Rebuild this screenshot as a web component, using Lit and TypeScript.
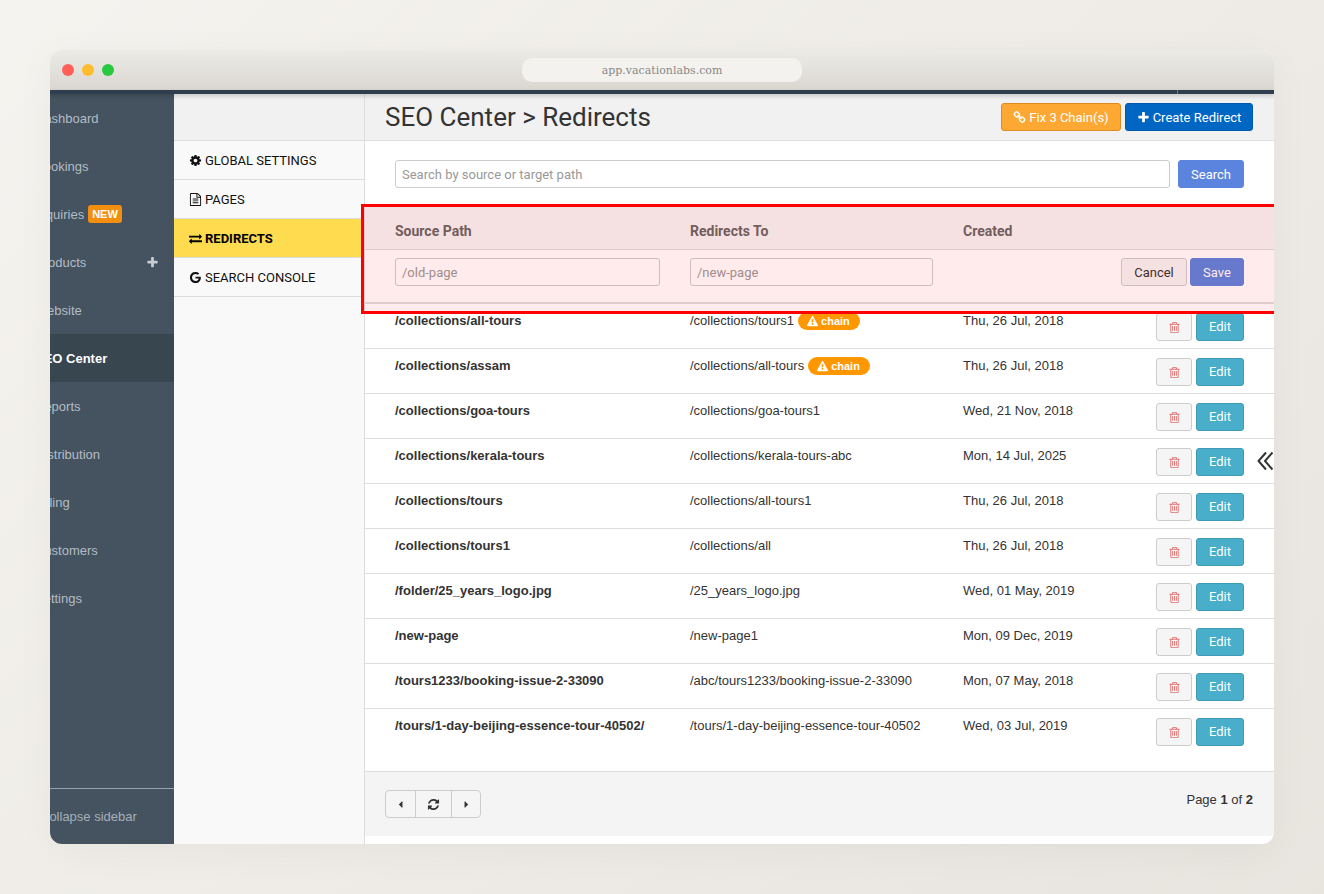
import { LitElement, html, css, svg } from "lit";
import { customElement } from "lit/decorators.js";

const P = {
  cog: "M1152 896q0-106-75-181t-181-75-181 75-75 181 75 181 181 75 181-75 75-181zm512-109v222q0 12-8 23t-20 13l-185 28q-19 54-39 91 35 50 107 138 10 12 10 25t-9 23q-27 37-99 108t-94 71q-12 0-26-9l-138-108q-44 23-91 38-16 136-29 186-7 28-36 28h-222q-14 0-24.5-8.5t-11.5-21.5l-28-184q-49-16-90-37l-141 107q-10 9-25 9-14 0-25-11-126-114-165-168-7-10-7-23 0-12 8-23 15-21 51-66.5t54-70.5q-27-50-41-99l-183-27q-13-2-21-12.5t-8-23.5v-222q0-12 8-23t19-13l186-28q14-46 39-92-40-57-107-138-10-12-10-24 0-10 9-23 26-36 98.5-107.5t94.5-71.5q13 0 26 10l138 107q44-23 91-38 16-136 29-186 7-28 36-28h222q14 0 24.5 8.5t11.5 21.5l28 184q49 16 90 37l142-107q9-9 24-9 13 0 25 10 129 119 165 170 7 8 7 22 0 12-8 23-15 21-51 66.5t-54 70.5q26 50 41 98l183 28q13 2 21 12.5t8 23.5z",
  plus: "M1600 736v192q0 40-28 68t-68 28h-416v416q0 40-28 68t-68 28h-192q-40 0-68-28t-28-68v-416h-416q-40 0-68-28t-28-68v-192q0-40 28-68t68-28h416v-416q0-40 28-68t68-28h192q40 0 68 28t28 68v416h416q40 0 68 28t28 68z",
  exchange: "M1792 1184v192q0 13-9.5 22.5t-22.5 9.5h-1376v192q0 13-9.5 22.5t-22.5 9.5q-12 0-24-10l-319-320q-9-9-9-22 0-14 9-23l320-320q9-9 23-9 13 0 22.5 9.5t9.5 22.5v192h1376q13 0 22.5 9.5t9.5 22.5zm0-544q0 14-9 23l-320 320q-9 9-23 9-13 0-22.5-9.5t-9.5-22.5v-192h-1376q-13 0-22.5-9.5t-9.5-22.5v-192q0-13 9.5-22.5t22.5-9.5h1376v-192q0-14 9-23t23-9q12 0 24 10l319 319q9 9 9 23z",
  file: "M1596 380q28 28 48 76t20 88v1152q0 40-28 68t-68 28h-1344q-40 0-68-28t-28-68v-1600q0-40 28-68t68-28h896q40 0 88 20t76 48zm-444-244v376h376q-10-29-22-41l-313-313q-12-12-41-22zm384 1528v-1024h-416q-40 0-68-28t-28-68v-416h-768v1536h1280zm-1024-864q0-14 9-23t23-9h704q14 0 23 9t9 23v64q0 14-9 23t-23 9h-704q-14 0-23-9t-9-23v-64zm736 224q14 0 23 9t9 23v64q0 14-9 23t-23 9h-704q-14 0-23-9t-9-23v-64q0-14 9-23t23-9h704zm0 256q14 0 23 9t9 23v64q0 14-9 23t-23 9h-704q-14 0-23-9t-9-23v-64q0-14 9-23t23-9h704z",
  google: "M896 786h725q12 67 12 128 0 217-91 387.5t-259.5 266.5-386.5 96q-157 0-299-60.5t-245-163.5-163.5-245-60.5-299 60.5-299 163.5-245 245-163.5 299-60.5q300 0 515 201l-209 201q-123-119-306-119-129 0-238.5 65t-173.5 176.5-64 243.5 64 243.5 173.5 176.5 238.5 65q87 0 160-24t120-60 82-82 51.5-87 22.5-78h-436v-264z",
  trash: "M704 736v576q0 14-9 23t-23 9h-64q-14 0-23-9t-9-23v-576q0-14 9-23t23-9h64q14 0 23 9t9 23zm256 0v576q0 14-9 23t-23 9h-64q-14 0-23-9t-9-23v-576q0-14 9-23t23-9h64q14 0 23 9t9 23zm256 0v576q0 14-9 23t-23 9h-64q-14 0-23-9t-9-23v-576q0-14 9-23t23-9h64q14 0 23 9t9 23zm128 724v-948h-896v948q0 22 7 40.5t14.5 27 10.5 8.5h832q3 0 10.5-8.5t14.5-27 7-40.5zm-672-1076h448l-48-117q-7-9-17-11h-317q-10 2-17 11zm928 32v64q0 14-9 23t-23 9h-96v948q0 83-47 143.5t-113 60.5h-832q-66 0-113-58.5t-47-141.5v-952h-96q-14 0-23-9t-9-23v-64q0-14 9-23t23-9h309l70-167q15-37 54-63t79-26h320q40 0 79 26t54 63l70 167h309q14 0 23 9t9 23z",
  warn: "M1024 1375v-190q0-14-9.5-23.5t-22.5-9.5h-192q-13 0-22.5 9.5t-9.5 23.5v190q0 14 9.5 23.5t22.5 9.5h192q13 0 22.5-9.5t9.5-23.5zm-2-374l18-459q0-12-10-19-13-11-24-11h-220q-11 0-24 11-10 7-10 21l17 457q0 10 10 16.5t24 6.5h185q14 0 23.5-6.5t10.5-16.5zm-14-934l768 1408q35 63-2 126-17 29-46.5 46t-63.5 17h-1536q-34 0-63.5-17t-46.5-46q-37-63-2-126l768-1408q17-31 47-49t65-18 65 18 47 49z",
  left: "M1216 448v896q0 26-19 45t-45 19-45-19l-448-448q-19-19-19-45t19-45l448-448q19-19 45-19t45 19 19 45z",
  right: "M1152 896q0 26-19 45l-448 448q-19 19-45 19t-45-19-19-45v-896q0-26 19-45t45-19 45 19l448 448q19 19 19 45z",
  refresh: "M1639 1056q0 5-1 7-64 268-268 434.5t-478 166.5q-146 0-282.5-55t-243.5-157l-129 129q-19 19-45 19t-45-19-19-45v-448q0-26 19-45t45-19h448q26 0 45 19t19 45-19 45l-137 137q71 66 161 102t187 36q134 0 250-65t186-179q11-17 53-117 8-23 30-23h192q13 0 22.5 9.5t9.5 22.5zm25-800v448q0 26-19 45t-45 19h-448q-26 0-45-19t-19-45 19-45l138-138q-148-137-349-137-134 0-250 65t-186 179q-11 17-53 117-8 23-30 23h-199q-13 0-22.5-9.5t-9.5-22.5v-7q65-268 270-434.5t480-166.5q146 0 284 55.5t245 156.5l130-129q19-19 45-19t45 19 19 45z",
  link: "M1520 1216q0-40-28-68l-208-208q-28-28-68-28-42 0-72 32 3 3 19 18.5t21.5 21.5 15 19 13 25.5 3.5 27.5q0 40-28 68t-68 28q-15 0-27.5-3.5t-25.5-13-19-15-21.5-21.5-18.5-19q-33 31-33 73 0 40 28 68l206 207q27 27 68 27 40 0 68-26l147-146q28-28 28-67zm-703-705q0-40-28-68l-206-207q-28-28-68-28-39 0-68 27l-147 146q-28 28-28 67 0 40 28 68l208 208q27 27 68 27 42 0 72-31-3-3-19-18.5t-21.5-21.5-15-19-13-25.5-3.5-27.5q0-40 28-68t68-28q15 0 27.5 3.5t25.5 13 19 15 21.5 21.5 18.5 19q33-31 33-73zm895 705q0 120-85 203l-147 146q-83 83-203 83-121 0-204-85l-206-207q-83-83-83-203 0-123 88-209l-88-88q-86 88-208 88-120 0-204-84l-208-208q-84-84-84-204t85-203l147-146q83-83 203-83 121 0 204 85l206 207q83 83 83 203 0 123-88 209l88 88q86-88 208-88 120 0 204 84l208 208q84 84 84 204z",
};

const icon = (name: keyof typeof P, size = 13) =>
  html`<svg class="ic" width=${size} height=${size} viewBox="0 0 1792 1792" fill="currentColor">${svg`<path d=${P[name]}></path>`}</svg>`;

const NAV = ["Dashboard", "Bookings", "Inquiries", "Products", "Website", "SEO Center", "Reports", "Distribution", "Billing", "Customers", "Settings"];

const SUB: { icon: keyof typeof P; label: string; active?: boolean }[] = [
  { icon: "cog", label: "GLOBAL SETTINGS" },
  { icon: "file", label: "PAGES" },
  { icon: "exchange", label: "REDIRECTS", active: true },
  { icon: "google", label: "SEARCH CONSOLE" },
];

const ROWS: [string, string, string, boolean?][] = [
  ["/collections/all-tours", "/collections/tours1", "Thu, 26 Jul, 2018", true],
  ["/collections/assam", "/collections/all-tours", "Thu, 26 Jul, 2018", true],
  ["/collections/goa-tours", "/collections/goa-tours1", "Wed, 21 Nov, 2018"],
  ["/collections/kerala-tours", "/collections/kerala-tours-abc", "Mon, 14 Jul, 2025"],
  ["/collections/tours", "/collections/all-tours1", "Thu, 26 Jul, 2018"],
  ["/collections/tours1", "/collections/all", "Thu, 26 Jul, 2018"],
  ["/folder/25_years_logo.jpg", "/25_years_logo.jpg", "Wed, 01 May, 2019"],
  ["/new-page", "/new-page1", "Mon, 09 Dec, 2019"],
  ["/tours1233/booking-issue-2-33090", "/abc/tours1233/booking-issue-2-33090", "Mon, 07 May, 2018"],
  ["/tours/1-day-beijing-essence-tour-40502/", "/tours/1-day-beijing-essence-tour-40502", "Wed, 03 Jul, 2019"],
];

@customElement("app-root")
export class AppRoot extends LitElement {
  static styles = css`
    :host {
      display: block;
      height: 894px;
      padding: 50px;
      box-sizing: border-box;
      background: linear-gradient(135deg, #f5f3ef 0%, #e8e5df 100%);
      font-family: "Liberation Sans", Arial, sans-serif;
      font-size: 13px;
      color: #333;
    }
    * { box-sizing: border-box; }
    .ic { display: block; flex: none; }
    .window {
      height: 794px;
      border-radius: 12px;
      overflow: hidden;
      display: flex;
      flex-direction: column;
      background: #fff;
      box-shadow: 0 8px 40px rgba(0, 0, 0, 0.04);
    }
    .titlebar {
      height: 40px;
      flex: none;
      display: grid;
      grid-template-columns: 1fr 280px 1fr;
      align-items: center;
      padding: 0 12px;
      background: linear-gradient(180deg, #ecebe6 0%, #dad7d1 100%);
    }
    .lights { display: flex; gap: 8px; }
    .light { width: 12px; height: 12px; border-radius: 50%; }
    .url {
      height: 24px;
      border-radius: 10px;
      background: #f3f2ee;
      color: #888;
      font-family: "DejaVu Serif", serif;
      font-size: 11px;
      display: flex;
      align-items: center;
      justify-content: center;
    }
    .strip {
      height: 4px;
      flex: none;
      background: #2f3e4e;
      position: relative;
      z-index: 3;
      box-shadow: 0 2px 4px rgba(0, 0, 0, 0.2);
      display: flex;
      justify-content: flex-end;
      padding-right: 96px;
    }
    .strip i { width: 1px; background: #6c7884; }
    .body { flex: 1; min-height: 0; display: flex; position: relative; }
    .side {
      width: 124px;
      flex: none;
      background: #44535f;
      color: #b3bcc6;
      display: flex;
      flex-direction: column;
      overflow: hidden;
    }
    .nav-item {
      height: 48px;
      flex: none;
      display: flex;
      align-items: center;
      padding-right: 15px;
      white-space: nowrap;
    }
    .nav-item .t { margin-left: -15px; }
    .nav-item.on { background: #384650; color: #fff; font-weight: 700; }
    .new {
      margin-left: 4px;
      height: 18px;
      padding: 0 4px;
      border-radius: 3px;
      background: #f28f0f;
      color: #fff;
      font-weight: 700;
      font-size: 11px;
      display: flex;
      align-items: center;
    }
    .plus { margin-left: auto; color: #c6ccd3; }
    .collapse {
      margin-top: auto;
      height: 56px;
      flex: none;
      border-top: 1px solid #95a2b0;
      display: flex;
      align-items: center;
      white-space: nowrap;
      color: #a5afba;
      padding-bottom: 0;
    }
    .collapse span { margin-left: -10px; }
    .sub {
      width: 191px;
      flex: none;
      background: #f9f9f9;
      border-right: 1px solid #ddd;
      font-family: Roboto, sans-serif;
      font-size: 13px;
      color: #111;
    }
    .sub-head { height: 47px; background: #f1f1f1; border-bottom: 1px solid #ddd; }
    .sub-item {
      height: 39px;
      display: flex;
      align-items: center;
      gap: 3px;
      padding-left: 15px;
      border-bottom: 1px solid #ddd;
    }
    .sub-item:first-of-type { height: 38px; }
    .sub-item.on { background: #ffdb4f; font-weight: 700; color: #000; gap: 3px; }
    .main { flex: 1; min-width: 0; display: flex; flex-direction: column; }
    .head {
      height: 47px;
      flex: none;
      background: #f1f1f1;
      border-bottom: 1px solid #ddd;
      display: flex;
      align-items: center;
      padding: 0 21px 0 20px;
      gap: 4px;
    }
    h1 {
      margin: 0 auto 0 0;
      font-family: Roboto, sans-serif;
      font-weight: 400;
      font-size: 26px;
      color: #333;
    }
    .btn {
      font-family: Roboto, sans-serif;
      font-size: 13px;
      height: 28px;
      border-radius: 3px;
      display: inline-flex;
      align-items: center;
      justify-content: center;
      gap: 3px;
      border: 1px solid transparent;
      color: #fff;
    }
    .fix { width: 120px; background: #fda832; border-color: #d98d22; }
    .create { width: 128px; background: #0066c4; border-color: #0059aa; }
    .searchrow {
      flex: none;
      display: flex;
      gap: 8px;
      padding: 19px 30px 0;
      height: 64px;
    }
    .field {
      height: 28px;
      border: 1px solid #ccc;
      border-radius: 3px;
      background: #fff;
      font-family: Roboto, sans-serif;
      font-size: 13px;
      color: #999;
      padding: 0 6px;
      display: flex;
      align-items: center;
    }
    .searchrow .field { flex: 1; }
    .blue { background: #5b84de; border-color: #5b84de; width: 66px; }
    .grid {
      display: grid;
      grid-template-columns: 265px 243px 1fr;
      column-gap: 30px;
      padding: 0 30px;
    }
    .th {
      height: 45px;
      flex: none;
      background: #f5f5f5;
      border-bottom: 1px solid #ddd;
      align-items: center;
      padding-top: 7px;
      font-family: Roboto, sans-serif;
      font-weight: 700;
      font-size: 14px;
      color: #666;
    }
    .th > div { position: relative; }
    .formrow {
      height: 54px;
      flex: none;
      padding-top: 8px;
      border-bottom: 2px solid #ddd;
    }
    .actions { display: flex; justify-content: flex-end; gap: 3px; }
    .cancel { width: 66px; background: #f5f5f5; border-color: #ccc; color: #333; }
    .save { width: 54px; background: #5b84de; border-color: #5b84de; }
    .row {
      height: 45px;
      flex: none;
      padding-top: 8px;
      border-bottom: 1px solid #ddd;
      color: #333;
      line-height: 18px;
    }
    .row:last-of-type { height: 63px; }
    .path { font-weight: 700; }
    .target { display: flex; gap: 4px; align-items: flex-start; white-space: nowrap; }
    .chain {
      height: 18px;
      padding: 0 10px 0 9px;
      border-radius: 9px;
      background: #ff9800;
      color: #fff;
      font-weight: 700;
      font-size: 11px;
      display: inline-flex;
      align-items: center;
      gap: 3px;
    }
    .acts { display: flex; justify-content: flex-end; gap: 4px; margin-top: 1px; }
    .del { width: 36px; background: #f5f5f5; border-color: #ccc; color: #e07070; }
    .edit { width: 48px; background: #48aeca; border-color: #3f9ab5; }
    .foot {
      height: 64px;
      flex: none;
      background: #f4f4f4;
      display: flex;
      justify-content: space-between;
      padding: 18px 21px 0 20px;
    }
    .pager {
      height: 28px;
      display: flex;
      border: 1px solid #ccc;
      border-radius: 4px;
      background: #f5f5f5;
      color: #333;
    }
    .pager span { display: flex; align-items: center; justify-content: center; border-left: 1px solid #ccc; width: 36px; }
    .pager span:first-child { border-left: none; width: 29px; }
    .pager span:last-child { width: 29px; }
    .pageno { padding-top: 1px; line-height: 18px; }
    .overlay {
      position: absolute;
      left: 311px;
      right: -10px;
      top: 110px;
      height: 110px;
      border: 3px solid #f00;
      background: rgba(255, 0, 0, 0.08);
      pointer-events: none;
      z-index: 2;
    }
    .chev { position: absolute; left: 1207px; top: 357px; z-index: 2; color: #333; }
  `;

  render() {
    return html`
      <div class="window">
        <div class="titlebar">
          <div class="lights">
            <span class="light" style="background:#ff5f57"></span>
            <span class="light" style="background:#febc2e"></span>
            <span class="light" style="background:#28c840"></span>
          </div>
          <div class="url">app.vacationlabs.com</div>
          <div></div>
        </div>
        <div class="strip"><i></i></div>
        <div class="body">
          <aside class="side">
            ${NAV.map(
              (n) => html`<div class="nav-item ${n === "SEO Center" ? "on" : ""}">
                <span class="t">${n}</span>
                ${n === "Inquiries" ? html`<span class="new">NEW</span>` : ""}
                ${n === "Products" ? html`<span class="plus">${icon("plus", 13)}</span>` : ""}
              </div>`
            )}
            <div class="collapse"><span>Collapse sidebar</span></div>
          </aside>
          <nav class="sub">
            <div class="sub-head"></div>
            ${SUB.map(
              (s) => html`<div class="sub-item ${s.active ? "on" : ""}">${icon(s.icon, 13)}<span>${s.label}</span></div>`
            )}
          </nav>
          <main class="main">
            <header class="head">
              <h1>SEO Center &gt; Redirects</h1>
              <span class="btn fix">${icon("link", 13)}Fix 3 Chain(s)</span>
              <span class="btn create">${icon("plus", 13)}Create Redirect</span>
            </header>
            <div class="searchrow">
              <div class="field">Search by source or target path</div>
              <span class="btn blue">Search</span>
            </div>
            <div class="grid th"><div>Source Path</div><div>Redirects To</div><div>Created</div></div>
            <div class="grid formrow">
              <div class="field">/old-page</div>
              <div class="field">/new-page</div>
              <div class="actions"><span class="btn cancel">Cancel</span><span class="btn save">Save</span></div>
            </div>
            ${ROWS.map(
              (r) => html`<div class="grid row" style="grid-template-columns:265px 243px 1fr">
                <div class="path">${r[0]}</div>
                <div class="target">${r[1]}${r[3] ? html`<span class="chain">${icon("warn", 11)}chain</span>` : ""}</div>
                <div style="display:flex;justify-content:space-between">
                  <span>${r[2]}</span>
                  <span class="acts"><span class="btn del">${icon("trash", 13)}</span><span class="btn edit">Edit</span></span>
                </div>
              </div>`
            )}
            <footer class="foot">
              <div class="pager">
                <span>${icon("left", 11)}</span><span>${icon("refresh", 13)}</span><span>${icon("right", 11)}</span>
              </div>
              <div class="pageno">Page <b>1</b> of <b>2</b></div>
            </footer>
          </main>
          <div class="overlay"></div>
          <svg class="chev" width="18" height="20" viewBox="0 0 18 20" fill="none" stroke="currentColor" stroke-width="2">
            <polyline points="9,1.5 1.5,10 9,18.5"></polyline>
            <polyline points="15.5,1.5 8,10 15.5,18.5"></polyline>
          </svg>
        </div>
      </div>
    `;
  }
}
